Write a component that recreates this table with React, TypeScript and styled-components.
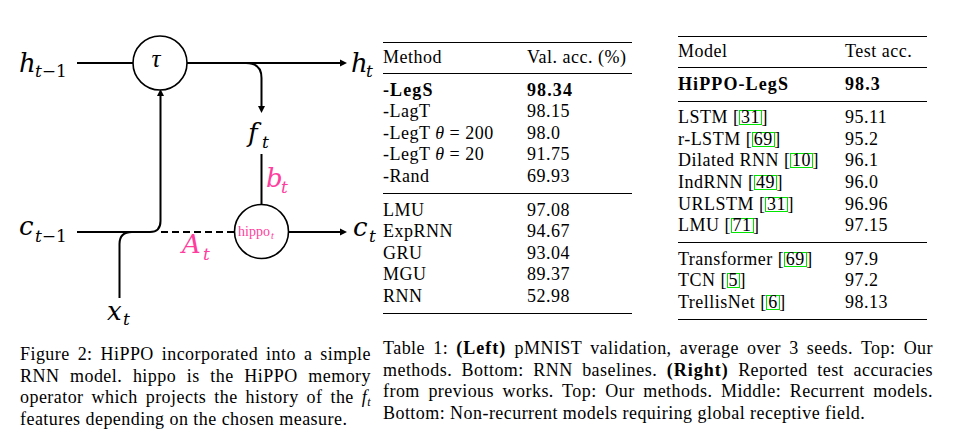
import React from "react";
import styled, { createGlobalStyle } from "styled-components";

const PINK = "#ff3d9e";
const CITE = "#00e600";
const SERIF = `"Liberation Serif", "Times New Roman", serif`;

const GlobalStyle = createGlobalStyle`
  html, body { margin: 0; padding: 0; background: #fff; }
  body {
    width: 954px;
    height: 440px;
    overflow: hidden;
    color: #000;
    font-family: ${SERIF};
  }
`;

const Page = styled.div`
  display: flex;
  align-items: flex-start;
  gap: 12px;
  padding-left: 20px;
  width: 954px;
  height: 440px;
  box-sizing: border-box;
`;

const FigureColumn = styled.div`
  width: 351px;
  flex: none;
  padding-top: 20px;
  display: flex;
  flex-direction: column;
`;

const Diagram = styled.svg`
  display: block;
  width: 360px;
  height: 324px;
  overflow: visible;
`;

const Wire = styled.path<{ $dashed?: boolean }>`
  fill: none;
  stroke: #000;
  stroke-width: 2;
  stroke-dasharray: ${(p) => (p.$dashed ? "7 4" : "none")};
`;

const Node = styled.circle`
  fill: #fff;
  stroke: #000;
  stroke-width: 1.6;
`;

const Head = styled.polygon`
  fill: #000;
`;

const MathText = styled.text<{ $size: number; $pink?: boolean; $upright?: boolean; $font?: string }>`
  font-family: ${(p) => p.$font ?? `"DejaVu Serif", serif`};
  font-style: ${(p) => (p.$upright ? "normal" : "italic")};
  font-size: ${(p) => p.$size}px;
  fill: ${(p) => (p.$pink ? PINK : "#000")};
`;

const TableColumn = styled.div`
  width: 550px;
  flex: none;
  padding-top: 36px;
  display: flex;
  flex-direction: column;
`;

const TablesRow = styled.div`
  display: flex;
  align-items: center;
  gap: 46px;
`;

const Table = styled.table`
  border-collapse: collapse;
  table-layout: fixed;
  width: 249px;
  border-top: 1.5px solid #000;
  border-bottom: 1.5px solid #000;
  font-family: ${SERIF};
  font-size: 18px;
  line-height: 21.6px;
  letter-spacing: 0.5px;
  color: #000;
`;

const Col = styled.col<{ $w: number }>`
  width: ${(p) => p.$w}px;
`;

const HeadCell = styled.th`
  font-weight: normal;
  text-align: left;
  padding: 4px 0 4.5px;
  white-space: nowrap;
  border-bottom: 1px solid #000;
`;

const Group = styled.tbody`
  & + & {
    border-top: 1px solid #000;
  }
  tr:first-child td {
    padding-top: 5.5px;
  }
  tr:last-child td {
    padding-bottom: 5.5px;
  }
`;

const Cell = styled.td<{ $bold?: boolean }>`
  padding: 0;
  white-space: nowrap;
  font-weight: ${(p) => (p.$bold ? "bold" : "normal")};
  letter-spacing: ${(p) => (p.$bold ? "1.1px" : "0.5px")};
`;

const Var = styled.i`
  font-style: italic;
`;

const Cite = styled.span`
  display: inline-block;
  border: 1px solid ${CITE};
  line-height: 13px;
  padding: 0 1px;
  margin: 0 -0.5px;
`;

const Caption = styled.div<{ $offset: number }>`
  margin-top: ${(p) => p.$offset}px;
  font-family: ${SERIF};
  font-size: 18px;
  line-height: 21.6px;
  letter-spacing: 0.45px;
`;

const CaptionLine = styled.span<{ $last?: boolean }>`
  display: block;
  text-align: ${(p) => (p.$last ? "left" : "justify")};
  text-align-last: ${(p) => (p.$last ? "left" : "justify")};
`;

const Strong = styled.b`
  font-weight: bold;
  letter-spacing: 1px;
`;

const Sub = styled.sub`
  font-size: 12px;
  font-style: italic;
  vertical-align: -3px;
  line-height: 0;
`;

type Row = { m: React.ReactNode; v: string; bold?: boolean };

const leftGroups: Row[][] = [
  [
    { m: "-LegS", v: "98.34", bold: true },
    { m: "-LagT", v: "98.15" },
    { m: <>-LegT <Var>θ</Var> = 200</>, v: "98.0" },
    { m: <>-LegT <Var>θ</Var> = 20</>, v: "91.75" },
    { m: "-Rand", v: "69.93" },
  ],
  [
    { m: "LMU", v: "97.08" },
    { m: "ExpRNN", v: "94.67" },
    { m: "GRU", v: "93.04" },
    { m: "MGU", v: "89.37" },
    { m: "RNN", v: "52.98" },
  ],
];

const cite = (name: string, n: string) => (
  <>
    {name} [<Cite>{n}</Cite>]
  </>
);

const rightGroups: Row[][] = [
  [{ m: "HiPPO-LegS", v: "98.3", bold: true }],
  [
    { m: cite("LSTM", "31"), v: "95.11" },
    { m: cite("r-LSTM", "69"), v: "95.2" },
    { m: cite("Dilated RNN", "10"), v: "96.1" },
    { m: cite("IndRNN", "49"), v: "96.0" },
    { m: cite("URLSTM", "31"), v: "96.96" },
    { m: cite("LMU", "71"), v: "97.15" },
  ],
  [
    { m: cite("Transformer", "69"), v: "97.9" },
    { m: cite("TCN", "5"), v: "97.2" },
    { m: cite("TrellisNet", "6"), v: "98.13" },
  ],
];

function ResultTable({
  head,
  groups,
  first,
}: {
  head: [string, string];
  groups: Row[][];
  first: number;
}) {
  return (
    <Table>
      <colgroup>
        <Col $w={first} />
        <Col $w={249 - first} />
      </colgroup>
      <thead>
        <tr>
          <HeadCell>{head[0]}</HeadCell>
          <HeadCell>{head[1]}</HeadCell>
        </tr>
      </thead>
      {groups.map((g, gi) => (
        <Group key={gi}>
          {g.map((r, ri) => (
            <tr key={ri}>
              <Cell $bold={r.bold}>{r.m}</Cell>
              <Cell $bold={r.bold}>{r.v}</Cell>
            </tr>
          ))}
        </Group>
      ))}
    </Table>
  );
}

function RnnDiagram() {
  return (
    <Diagram viewBox="20 20 360 324">
      {/* hidden state path */}
      <Wire d="M77 63 H133" />
      <Wire d="M187 63 H341" />
      <Head points="347,63 340,59.5 340,66.5" />
      <Wire d="M246 63 Q261.5 63 261.5 78 V107" />
      <Head points="261.5,113 258,106 265,106" />
      {/* f_t into hippo */}
      <Wire d="M261.5 154 V205" />
      {/* memory path */}
      <Wire d="M77 232 H150 Q160.5 232 160.5 221 V96" />
      <Head points="160.5,89 157,96 164,96" />
      <Wire d="M119.5 298 V244 Q119.5 232 132 232" />
      <Wire $dashed d="M161 232 H235" />
      <Wire d="M289 232 H341" />
      <Head points="347,232 340,228.5 340,235.5" />
      {/* nodes */}
      <Node cx={160} cy={63} r={27} />
      <Node cx={261.5} cy={231.5} r={27} />
      <MathText $size={25} $font={SERIF} x={156} y={67} textAnchor="middle">τ</MathText>
      <MathText $size={14} $pink $upright $font={SERIF} x={238} y={236}>
        hippo
      </MathText>
      <MathText $size={10} $pink $font={SERIF} x={271} y={239}>t</MathText>
      {/* labels */}
      <MathText $size={26} x={19} y={72}>h</MathText>
      <MathText $size={17} x={35} y={77}>
        t<tspan fontStyle="normal">−1</tspan>
      </MathText>
      <MathText $size={26} x={351} y={72}>h</MathText>
      <MathText $size={17} x={366} y={77}>t</MathText>
      <MathText $size={26} x={19} y={235}>c</MathText>
      <MathText $size={17} x={35} y={242}>
        t<tspan fontStyle="normal">−1</tspan>
      </MathText>
      <MathText $size={26} x={353} y={236}>c</MathText>
      <MathText $size={17} x={369} y={242}>t</MathText>
      <MathText $size={26} x={107} y={320}>x</MathText>
      <MathText $size={17} x={123} y={325}>t</MathText>
      <MathText $size={26} x={248} y={142}>f</MathText>
      <MathText $size={17} x={262} y={148}>t</MathText>
      <MathText $size={26} $pink x={266} y={187}>b</MathText>
      <MathText $size={17} $pink x={281} y={193}>t</MathText>
      <MathText $size={26} $pink x={182} y={253}>A</MathText>
      <MathText $size={17} $pink x={203} y={260}>t</MathText>
    </Diagram>
  );
}

export default function App() {
  return (
    <>
      <GlobalStyle />
      <Page>
        <FigureColumn>
          <RnnDiagram />
          <Caption $offset={0}>
            <CaptionLine>Figure 2: HiPPO incorporated into a simple</CaptionLine>
            <CaptionLine>RNN model. hippo is the HiPPO memory</CaptionLine>
            <CaptionLine>
              operator which projects the history of the <Var>f</Var>
              <Sub>t</Sub>
            </CaptionLine>
            <CaptionLine $last>features depending on the chosen measure.</CaptionLine>
          </Caption>
        </FigureColumn>
        <TableColumn>
          <TablesRow>
            <ResultTable head={["Method", "Val. acc. (%)"]} groups={leftGroups} first={144} />
            <ResultTable head={["Model", "Test acc."]} groups={rightGroups} first={167} />
          </TablesRow>
          <Caption $offset={18}>
            <CaptionLine>
              Table 1: <Strong>(Left)</Strong> pMNIST validation, average over 3 seeds. Top: Our
            </CaptionLine>
            <CaptionLine>
              methods. Bottom: RNN baselines. <Strong>(Right)</Strong> Reported test accuracies
            </CaptionLine>
            <CaptionLine>
              from previous works. Top: Our methods. Middle: Recurrent models.
            </CaptionLine>
            <CaptionLine $last>
              Bottom: Non-recurrent models requiring global receptive field.
            </CaptionLine>
          </Caption>
        </TableColumn>
      </Page>
    </>
  );
}
